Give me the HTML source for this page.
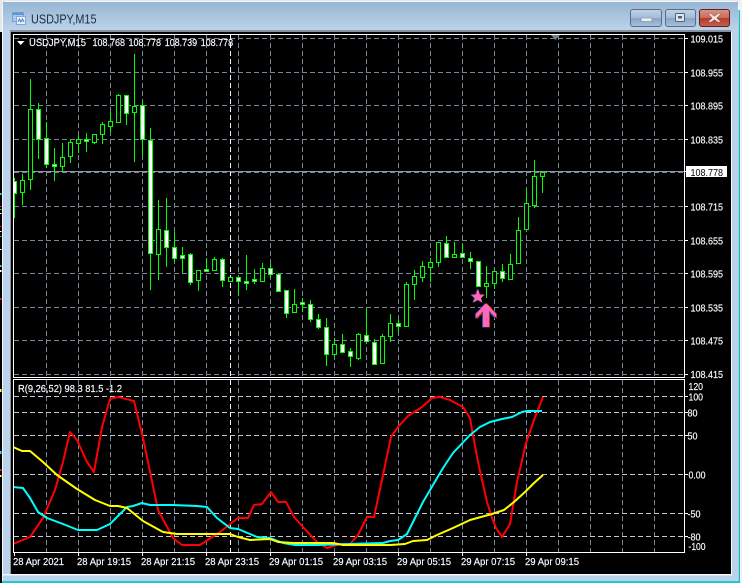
<!DOCTYPE html>
<html>
<head>
<meta charset="utf-8">
<style>
html,body{margin:0;padding:0;width:742px;height:583px;overflow:hidden;background:#000}
svg{display:block}
text{font-family:"Liberation Sans",sans-serif;font-size:10.5px;fill:#fff}
.t{fill:#f8fbff;stroke:#f8fbff;stroke-width:.18}
</style>
</head>
<body>
<svg width="742" height="583" viewBox="0 0 742 583" xmlns="http://www.w3.org/2000/svg">
<defs>
<linearGradient id="tb" x1="0" y1="0" x2="0" y2="1"><stop offset="0" stop-color="#96b6d2"/><stop offset="1" stop-color="#bcd3ea"/></linearGradient>
<linearGradient id="bn" x1="0" y1="0" x2="0" y2="1"><stop offset="0" stop-color="#c0d2e6"/><stop offset=".48" stop-color="#a5bdd6"/><stop offset=".52" stop-color="#86a5c6"/><stop offset="1" stop-color="#a8c2de"/></linearGradient>
<linearGradient id="cl" x1="0" y1="0" x2="0" y2="1"><stop offset="0" stop-color="#dc9486"/><stop offset=".48" stop-color="#c86c5c"/><stop offset=".52" stop-color="#b23c2a"/><stop offset="1" stop-color="#c8604e"/></linearGradient>
<clipPath id="ch"><rect x="14" y="35" width="670" height="342"/></clipPath>
<clipPath id="ind"><rect x="14" y="380" width="670" height="172"/></clipPath>
</defs>

<!-- desktop behind -->
<rect width="742" height="583" fill="#000"/>
<rect x="0" y="0" width="742" height="32" fill="#e4e8ec"/>
<rect x="739" y="0" width="3" height="583" fill="#f0f2f4"/>

<!-- left edge marks -->
<rect x="0" y="193" width="1.5" height="2" fill="#30d8e0"/>
<rect x="0" y="206" width="1.5" height="1" fill="#ff30a0"/>
<rect x="0" y="209" width="1.5" height="1" fill="#30e060"/>
<rect x="0" y="213" width="1.5" height="1" fill="#fff"/>
<rect x="0" y="226" width="1.5" height="1" fill="#f02020"/>
<rect x="0" y="231" width="1.5" height="1" fill="#fff"/>
<rect x="0" y="236" width="1.5" height="1" fill="#20e040"/>
<rect x="0" y="249" width="1.5" height="1" fill="#fff"/>
<rect x="0" y="265" width="1.5" height="2" fill="#30d8e0"/>
<rect x="0" y="270" width="1.5" height="2" fill="#fff"/>
<rect x="0" y="298" width="1.5" height="2" fill="#f02020"/>
<rect x="0" y="389" width="1.5" height="3" fill="#ffff20"/>
<rect x="0" y="451" width="1.5" height="3" fill="#30e0ff"/>
<rect x="0" y="469" width="1.5" height="2" fill="#f02020"/>
<rect x="0" y="475" width="1.5" height="2" fill="#ffff20"/>

<!-- window frame -->
<path d="M2 581V6Q2 1 7 1H734Q739 1 739 6V581Z" fill="#bad2ea"/>
<path d="M2.500 581V6Q2.500 1.500 7 1.500H734Q738.500 1.500 738.500 6V581" fill="none" stroke="#f4f8fc" stroke-width="1"/>
<rect x="3" y="2" width="735" height="28" fill="url(#tb)"/>
<rect x="10" y="30" width="721" height="2" fill="#87929c"/>
<rect x="10" y="32" width="2" height="542" fill="#87929c"/>
<rect x="11" y="32" width="720" height="542" fill="#000"/>
<rect x="731" y="32" width="1" height="542" fill="#f4f8fc"/>
<rect x="3" y="574" width="729" height="1.500" fill="#f4f8fc"/>
<rect x="2" y="581" width="737" height="2" fill="#22c8d8"/>
<rect x="738.500" y="10" width="1.500" height="573" fill="#2ab4c4"/>

<!-- title -->
<g>
<rect x="12.500" y="12.500" width="11" height="9" fill="#a8c8ee" stroke="#6f9fd6"/>
<rect x="16.500" y="16.500" width="9" height="8" fill="#e8f2fc" stroke="#7fa8d8"/>
<path d="M18 22l1.500-3 1.500 3 1.500-3 1.500 3" fill="none" stroke="#4f7fc0" stroke-width="1"/>
<rect x="13" y="13" width="10" height="2" fill="#5f95d8"/>
</g>
<text x="31" y="23.500" textLength="65.500" lengthAdjust="spacingAndGlyphs" style="font-size:12.500px;fill:#1d2d3e">USDJPY,M15</text>

<!-- buttons -->
<rect x="630.500" y="9.500" width="31" height="17" rx="2.500" fill="url(#bn)" stroke="#56708c"/>
<rect x="641" y="18" width="11" height="3.500" rx="1" fill="#e8eef4" stroke="#6c84a0" stroke-width=".6"/>
<rect x="665.500" y="9.500" width="30" height="17" rx="2.500" fill="url(#bn)" stroke="#56708c"/>
<rect x="675.500" y="13.500" width="9" height="8" rx="1" fill="#dfe8f2" stroke="#50647c"/>
<rect x="678" y="16" width="4" height="2.500" fill="#50647c"/>
<rect x="699.500" y="9.500" width="30" height="17" rx="2.500" fill="url(#cl)" stroke="#5c2024"/>
<path d="M710.500 13.500l4 3 4-3h2.500l-4.500 4.500 4.500 4h-3l-3.500-2.500-3.500 2.500h-3l4.500-4-4.500-4.500z" fill="#f2f2f2" stroke="#8a4a44" stroke-width=".4"/>

<!-- grid upper and lower vertical -->
<g stroke="#778899" stroke-width="1" stroke-dasharray="5 3" fill="none" shape-rendering="crispEdges">
<path d="M46.500 35V377M78.500 35V377M110.500 35V377M142.500 35V377M174.500 35V377M206.500 35V377M238.500 35V377M270.500 35V377M302.500 35V377M334.500 35V377M366.500 35V377M398.500 35V377M430.500 35V377M462.500 35V377M494.500 35V377M526.500 35V377M558.500 35V377M590.500 35V377M622.500 35V377M654.500 35V377"/>
<path d="M46.500 380V552M78.500 380V552M110.500 380V552M142.500 380V552M174.500 380V552M206.500 380V552M238.500 380V552M270.500 380V552M302.500 380V552M334.500 380V552M366.500 380V552M398.500 380V552M430.500 380V552M462.500 380V552M494.500 380V552M526.500 380V552M558.500 380V552M590.500 380V552M622.500 380V552M654.500 380V552"/>
<path d="M14 38.500H684M14 72.500H684M14 105.500H684M14 139.500H684M14 172.500H684M14 206.500H684M14 240.500H684M14 273.500H684M14 307.500H684M14 340.500H684M14 374.500H684"/>
</g>
<g stroke="#c4c8cc" stroke-width="1" stroke-dasharray="5 3" fill="none" shape-rendering="crispEdges">
<path d="M14 396.500H684M14 412.500H684M14 435.500H684M14 474.500H684M14 513.500H684M14 536.500H684"/>
</g>
<!-- period separator -->
<path d="M230.500 35V377M230.500 380V552" stroke="#fff" stroke-dasharray="5 3" fill="none" shape-rendering="crispEdges"/>
<!-- current price line -->
<rect x="14" y="171" width="670" height="1" fill="#8b98a6"/>

<!-- candles -->
<g clip-path="url(#ch)" shape-rendering="crispEdges">
<path fill="none" stroke="#00ff00" stroke-width="1" d="M14.500 178V218M22.500 174V205M30.500 79V190M38.500 103V159M46.500 122V168M54.500 148V181M62.500 143V172M70.500 140V163M78.500 136V153M86.500 133V152M94.500 134V144M102.500 122V144M110.500 112V132M118.500 94V122M126.500 95V125M134.500 54V162M142.500 101V157M150.500 128V290M158.500 200V280M166.500 198V267M174.500 232V262M182.500 247V273M190.500 253V285M198.500 270V291M206.500 258V271M214.500 257V271M222.500 258V287M238.500 277V295M246.500 255V290M254.500 269V284M262.500 263V282M270.500 264V278M278.500 273V291M286.500 290V318M294.500 289V313M302.500 298V312M310.500 300V322M318.500 314V329M326.500 318V366M334.500 338V356M342.500 334V353M350.500 348V367M358.500 333V360M366.500 308V343M374.500 339V364M382.500 334V363M390.500 314V342M398.500 320V332M406.500 282V326M414.500 270V300M422.500 261V282M430.500 258V282M438.500 242V267M446.500 236V258M454.500 242V257M462.500 244V258M470.500 252V269M478.500 261V286M486.500 266V298M494.500 271V289M502.500 264V282M510.500 254V279M518.500 217V263M526.500 189V229M534.500 160V208M542.500 172V193"/>
<!-- outline (black) bodies -->
<path fill="#000" stroke="#00ff00" stroke-width="1" d="M20.500 180.500h4v12h-4zM28.500 109.500h4v70h-4zM60.500 157.500h4v9h-4zM68.500 142.500h4v14h-4zM76.500 139.500h4v4h-4zM92.500 134.500h4v8h-4zM100.500 124.500h4v10h-4zM108.500 121.500h4v5h-4zM116.500 95.500h4v27h-4zM132.500 106.500h4v6h-4zM156.500 229.500h4v25h-4zM196.500 270.500h4v10h-4zM212.500 259.500h4v11h-4zM228.500 277.500h4v4h-4zM260.500 268.500h4v13h-4zM292.500 304.500h4v8h-4zM332.500 344.500h4v10h-4zM356.500 334.500h4v24h-4zM380.500 336.500h4v27h-4zM388.500 323.500h4v13h-4zM404.500 284.500h4v42h-4zM412.500 276.500h4v8h-4zM420.500 266.500h4v11h-4zM428.500 262.500h4v5h-4zM436.500 242.500h4v20h-4zM452.500 254.500h4v3h-4zM484.500 283.500h4v3h-4zM492.500 271.500h4v12h-4zM508.500 264.500h4v15h-4zM516.500 230.500h4v33h-4zM524.500 203.500h4v26h-4zM532.500 176.500h4v29h-4zM540.500 172.500h4v4h-4z"/>
<!-- filled (white) bodies -->
<path fill="#fff" stroke="#00ff00" stroke-width="1" d="M12.500 181.500h4v12h-4zM36.500 109.500h4v30h-4zM44.500 138.500h4v26h-4zM52.500 164.500h4v2h-4zM84.500 139.500h4v2h-4zM124.500 95.500h4v18h-4zM140.500 105.500h4v34h-4zM148.500 140.500h4v113h-4zM164.500 230.500h4v17h-4zM172.500 247.500h4v11h-4zM180.500 255.500h4v3h-4zM188.500 254.500h4v28h-4zM204.500 269.500h4v2h-4zM220.500 259.500h4v21h-4zM236.500 277.500h4v4h-4zM244.500 281.500h4v2h-4zM252.500 279.500h4v2h-4zM268.500 268.500h4v6h-4zM276.500 274.500h4v17h-4zM284.500 290.500h4v23h-4zM300.500 302.500h4v2h-4zM308.500 304.500h4v15h-4zM316.500 319.500h4v8h-4zM324.500 327.500h4v27h-4zM340.500 344.500h4v8h-4zM348.500 351.500h4v5h-4zM364.500 335.500h4v6h-4zM372.500 342.500h4v22h-4zM396.500 323.500h4v3h-4zM444.500 243.500h4v14h-4zM460.500 253.500h4v4h-4zM468.500 258.500h4v3h-4zM476.500 261.500h4v25h-4zM500.500 271.500h4v7h-4z"/>
</g>

<!-- star and arrow -->
<g shape-rendering="crispEdges">
<polygon points="477,289 479,294.500 484,294.500 480,298 481.500,302.500 477,300 472.500,302.500 474,298 470,294.500 475,294.500" fill="#3848a8"/>
<polygon points="478,289 480,294.500 485,294.500 481,298 482.500,302.500 478,300 473.500,302.500 475,298 471,294.500 476,294.500" fill="#ff69b4"/>
<polygon points="487,303 497,314 497,319 490,312 490,327.500 484,327.500 484,312 477,319 477,314" fill="#c02828"/>
<polygon points="485,303 495,314 495,319 488,312 488,327.500 482,327.500 482,312 475,319 475,314" fill="#3848b8"/>
<polygon points="486,303 496,314 496,318 489,311 489,327 483,327 483,311 476,318 476,314" fill="#ff69b4"/>
</g>

<!-- indicator lines -->
<g clip-path="url(#ind)" fill="none" stroke-width="2" stroke-linejoin="round">
<polyline stroke="#ff0000" points="13,544 30,537 43,518 55,490 63,462 70,432 77,440 87,462 94,472 102,427 110,399 118,397 134,401 143,438 158,510 173,538 182,545 200,545 220,532 238,518 248,518 254,505 262,504 271,492 278,502 286,502 294,517 303,527 317,542 327,548 340,544 350,544 358,535 367,517 374,517 383,475 391,437 398,427 408,416 422,407 432,398 440,397 450,400 463,407 470,418 473,435 478,462 487,502 492,518 496,528 502,537 510,524 517,482 526,443 534,420 543,397"/>
<polyline stroke="#00ffff" points="13,487 23,488 30,498 38,512 47,518 63,524 78,530 97,530 110,524 127,507 133,506 142,503 150,505 173,505 197,506 207,507 217,518 230,528 238,529 250,534 257,537 270,538 283,543 295,545 317,545 383,543 390,541 398,540 407,534 413,522 423,502 433,485 443,468 453,453 470,435 480,427 490,422 502,419 512,417 522,412 527,411 542,411"/>
<polyline stroke="#ffff00" points="13,447 22,451 30,451 43,462 57,475 77,489 95,500 110,506 118,506 127,508 143,521 163,532 177,534 230,534 238,537 250,540 270,539 278,542 293,543 333,543 343,545 390,545 405,544 413,541 427,540 437,535 453,528 470,520 492,514 504,510 514,502 525,492 534,483 543,475"/>
</g>

<!-- frames -->
<g fill="none" stroke="#fff" stroke-width="1" shape-rendering="crispEdges">
<path d="M13.500 377.500V34.500H684.500V377.500H13.500Z"/>
<path d="M13.500 552.500V379.500H684.500V552.500H13.500Z"/>
<path d="M684 38.500h4M684 72.500h4M684 105.500h4M684 139.500h4M684 206.500h4M684 240.500h4M684 273.500h4M684 307.500h4M684 340.500h4M684 374.500h4"/>
<path d="M684 396.500h4M684 412.500h4M684 435.500h4M684 474.500h4M684 513.500h4M684 536.500h4M684 546.500h1"/>
<path d="M14.500 552v4M78.500 552v4M142.500 552v4M206.500 552v4M270.500 552v4M334.500 552v4M398.500 552v4M462.500 552v4M526.500 552v4"/>
</g>
<polygon points="551,35 560,35 555.500,40" fill="#708090"/>
<polygon points="17,41 24.500,41 20.750,45" fill="#fff"/>

<!-- upper labels -->
<text class="t" x="29" y="46" textLength="57" lengthAdjust="spacingAndGlyphs">USDJPY,M15</text>
<text class="t" x="92.500" y="46" textLength="32.500" lengthAdjust="spacingAndGlyphs">108.768</text>
<text class="t" x="128.500" y="46" textLength="32.500" lengthAdjust="spacingAndGlyphs">108.778</text>
<text class="t" x="164.700" y="46" textLength="32.500" lengthAdjust="spacingAndGlyphs">108.739</text>
<text class="t" x="200.700" y="46" textLength="32.500" lengthAdjust="spacingAndGlyphs">108.778</text>

<text class="t" x="690.500" y="42.500" textLength="32.500" lengthAdjust="spacingAndGlyphs">109.015</text>
<text class="t" x="690.500" y="76.500" textLength="32.500" lengthAdjust="spacingAndGlyphs">108.955</text>
<text class="t" x="690.500" y="109.500" textLength="32.500" lengthAdjust="spacingAndGlyphs">108.895</text>
<text class="t" x="690.500" y="143.500" textLength="32.500" lengthAdjust="spacingAndGlyphs">108.835</text>
<rect x="686" y="166" width="41" height="11" fill="#fff"/>
<path d="M684 171.500h2" stroke="#fff"/>
<text x="690.500" y="176" textLength="32.500" lengthAdjust="spacingAndGlyphs" style="fill:#000">108.778</text>
<text class="t" x="690.500" y="210.500" textLength="32.500" lengthAdjust="spacingAndGlyphs">108.715</text>
<text class="t" x="690.500" y="244.500" textLength="32.500" lengthAdjust="spacingAndGlyphs">108.655</text>
<text class="t" x="690.500" y="277.500" textLength="32.500" lengthAdjust="spacingAndGlyphs">108.595</text>
<text class="t" x="690.500" y="311.500" textLength="32.500" lengthAdjust="spacingAndGlyphs">108.535</text>
<text class="t" x="690.500" y="344.500" textLength="32.500" lengthAdjust="spacingAndGlyphs">108.475</text>
<text class="t" x="690.500" y="378" textLength="32.500" lengthAdjust="spacingAndGlyphs">108.415</text>

<!-- indicator labels -->
<text class="t" x="18" y="392" textLength="104" lengthAdjust="spacingAndGlyphs">R(9,26,52) 98.3 81.5 -1.2</text>
<text class="t" x="688.500" y="390" textLength="14.500" lengthAdjust="spacingAndGlyphs">120</text>
<text class="t" x="688.500" y="400.500" textLength="14.500" lengthAdjust="spacingAndGlyphs">100</text>
<text class="t" x="687.500" y="416.500" textLength="10" lengthAdjust="spacingAndGlyphs">80</text>
<text class="t" x="687.500" y="439.500" textLength="10" lengthAdjust="spacingAndGlyphs">50</text>
<text class="t" x="688.500" y="478.500" textLength="17" lengthAdjust="spacingAndGlyphs">0.00</text>
<text class="t" x="687.500" y="517.500" textLength="13" lengthAdjust="spacingAndGlyphs">-50</text>
<text class="t" x="687.500" y="540.500" textLength="13" lengthAdjust="spacingAndGlyphs">-80</text>
<text class="t" x="688.500" y="550" textLength="17" lengthAdjust="spacingAndGlyphs">-100</text>

<!-- time labels -->
<text class="t" x="13" y="565" textLength="51" lengthAdjust="spacingAndGlyphs">28 Apr 2021</text>
<text class="t" x="77" y="565" textLength="54" lengthAdjust="spacingAndGlyphs">28 Apr 19:15</text>
<text class="t" x="141" y="565" textLength="54" lengthAdjust="spacingAndGlyphs">28 Apr 21:15</text>
<text class="t" x="205" y="565" textLength="54" lengthAdjust="spacingAndGlyphs">28 Apr 23:15</text>
<text class="t" x="269" y="565" textLength="54" lengthAdjust="spacingAndGlyphs">29 Apr 01:15</text>
<text class="t" x="333" y="565" textLength="54" lengthAdjust="spacingAndGlyphs">29 Apr 03:15</text>
<text class="t" x="397" y="565" textLength="54" lengthAdjust="spacingAndGlyphs">29 Apr 05:15</text>
<text class="t" x="461" y="565" textLength="54" lengthAdjust="spacingAndGlyphs">29 Apr 07:15</text>
<text class="t" x="525" y="565" textLength="54" lengthAdjust="spacingAndGlyphs">29 Apr 09:15</text>
</svg>
</body>
</html>
